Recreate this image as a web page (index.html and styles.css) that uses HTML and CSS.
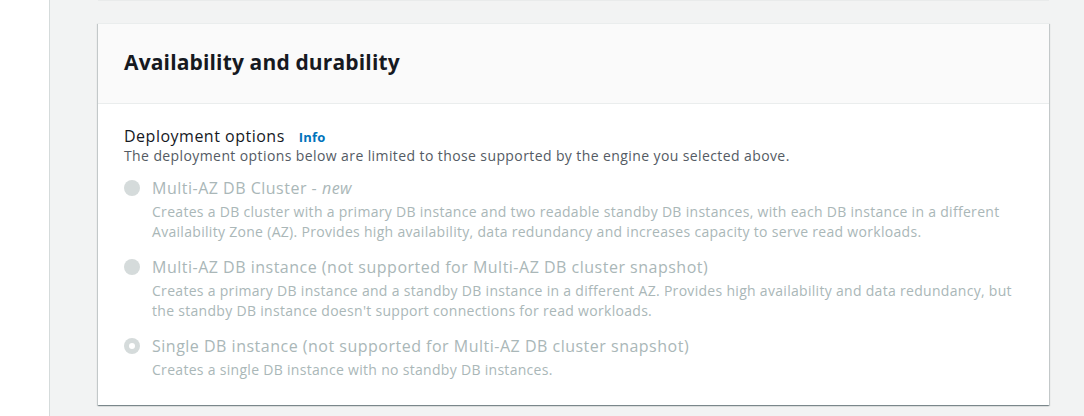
FILE: index.html
```html
<!DOCTYPE html>
<html>
<head>
<meta charset="utf-8">
<link rel="stylesheet" href="styles.css">
</head>
<body>
<div class="page">
  <aside class="side"></aside>
  <main class="main">
    <div class="prev-edge"></div>
    <section class="card">
      <header class="card-head">
        <h2 class="card-title">Availability and durability</h2>
      </header>
      <div class="card-body">
        <div class="field-label"><span>Deployment options</span><a class="info">Info</a></div>
        <div class="field-desc">The deployment options below are limited to those supported by the engine you selected above.</div>
        <div class="options">
          <div class="option">
            <span class="radio"></span>
            <div class="opt-text">
              <div class="opt-label">Multi-AZ DB Cluster - <i>new</i></div>
              <div class="opt-desc">Creates a DB cluster with a primary DB instance and two readable standby DB instances, with each DB instance in a different Availability Zone (AZ). Provides high availability, data redundancy and increases capacity to serve read workloads.</div>
            </div>
          </div>
          <div class="option">
            <span class="radio"></span>
            <div class="opt-text">
              <div class="opt-label">Multi-AZ DB instance (not supported for Multi-AZ DB cluster snapshot)</div>
              <div class="opt-desc">Creates a primary DB instance and a standby DB instance in a different AZ. Provides high availability and data redundancy, but the standby DB instance doesn't support connections for read workloads.</div>
            </div>
          </div>
          <div class="option">
            <span class="radio checked"></span>
            <div class="opt-text">
              <div class="opt-label">Single DB instance (not supported for Multi-AZ DB cluster snapshot)</div>
              <div class="opt-desc">Creates a single DB instance with no standby DB instances.</div>
            </div>
          </div>
        </div>
      </div>
    </section>
  </main>
</div>
</body>
</html>
```

FILE: styles.css
```css
* { box-sizing: border-box; }
html, body { margin: 0; padding: 0; }
body {
  background: #f2f3f3;
  font-family: "Open Sans", "Noto Sans", sans-serif;
  color: #16191f;
  width: 1084px;
  height: 416px;
  overflow: hidden;
}
.page { display: flex; height: 416px; }
.side {
  width: 50px;
  flex: none;
  background: #fff;
  border-right: 1px solid #d5dbdb;
}
.main {
  flex: 1;
  padding: 0 35px 0 48px;
  display: flex;
  flex-direction: column;
}
.prev-edge {
  height: 1px;
  background: #e9ebeb;
  margin-bottom: 22px;
}
.card {
  background: #fff;
  border-top: 1px solid #eaeded;
  box-shadow: 0 1px 1px 0 rgba(0,28,36,.3), 1px 1px 1px 0 rgba(0,28,36,.15), -1px 1px 1px 0 rgba(0,28,36,.15);
}
.card-head {
  background: #fafafa;
  border-bottom: 1px solid #eaeded;
  height: 80px;
  display: flex;
  align-items: center;
  padding: 0 26px 3px;
}
.card-title {
  margin: 0;
  font-size: 21px;
  font-weight: 700;
  line-height: 26px;
  letter-spacing: 0.15px;
  color: #16191f;
}
.card-body {
  padding: 22px 26px 25px;
}
.field-label {
  font-size: 16px;
  line-height: 20px;
  letter-spacing: 0.5px;
  display: flex;
  align-items: baseline;
}
.info {
  font-size: 13px;
  font-weight: 700;
  letter-spacing: 0.2px;
  color: #0073bb;
  margin-left: 14px;
}
.field-desc {
  font-size: 14px;
  line-height: 18px;
  letter-spacing: 0.4px;
  color: #545b64;
}
.options { display: flex; flex-direction: column; gap: 13px; margin-top: 11px; }
.option { display: flex; gap: 12px; }
.radio {
  flex: none;
  width: 16px;
  height: 16px;
  border-radius: 50%;
  background: #d5dbdb;
  margin-top: 4px;
  position: relative;
}
.radio.checked::after {
  content: "";
  position: absolute;
  left: 5px; top: 5px;
  width: 6px; height: 6px;
  border-radius: 50%;
  background: #fff;
}
.opt-text { max-width: 868px; }
.opt-label {
  font-size: 16px;
  line-height: 24px;
  letter-spacing: 0.5px;
  color: #aab7b8;
}
.opt-desc {
  font-size: 14px;
  line-height: 20px;
  letter-spacing: 0.3px;
  margin-top: 2px;
  color: #aab7b8;
}
```
